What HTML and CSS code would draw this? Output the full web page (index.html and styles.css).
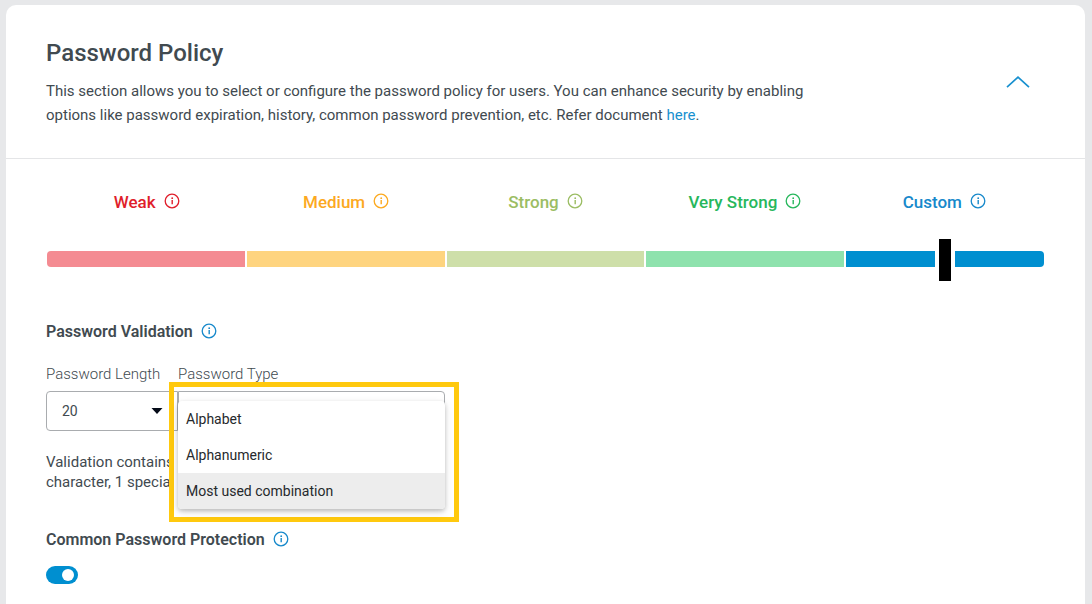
FILE: index.html
```html
<!DOCTYPE html>
<html lang="en">
<head>
<meta charset="utf-8">
<meta name="viewport" content="width=device-width, initial-scale=1">
<title>Password Policy</title>
<link rel="stylesheet" href="styles.css">
</head>
<body>
<svg class="sprite" aria-hidden="true">
  <symbol id="info" viewBox="0 0 16 16">
    <circle cx="8" cy="8" r="6.8" fill="none" stroke="currentColor" stroke-width="1.3"/>
    <path d="M8.2 7v4.2" fill="none" stroke="currentColor" stroke-width="1.4"/>
    <circle cx="8.2" cy="5.2" r="0.9" fill="currentColor"/>
  </symbol>
</svg>
<main class="card">
  <header class="card-header">
    <div class="intro">
      <h1 class="title">Password Policy</h1>
      <p class="description">This section allows you to select or configure the password policy for users. You can enhance security by enabling<br>options like password expiration, history, common password prevention, etc. Refer document <a class="link" href="#doc">here</a>.</p>
    </div>
    <button class="collapse" type="button" aria-label="Collapse section" aria-expanded="true">
      <svg width="24" height="14" viewBox="0 0 24 14"><path d="M1 12.2 12 2.2l11 10" fill="none" stroke="currentColor" stroke-width="1.7"/></svg>
    </button>
  </header>
  <div class="card-body">
    <div class="levels">
      <div class="level weak">Weak <svg class="info"><use href="#info"/></svg></div>
      <div class="level medium">Medium <svg class="info"><use href="#info"/></svg></div>
      <div class="level strong">Strong <svg class="info"><use href="#info"/></svg></div>
      <div class="level very-strong">Very Strong <svg class="info"><use href="#info"/></svg></div>
      <div class="level custom">Custom <svg class="info"><use href="#info"/></svg></div>
    </div>
    <div class="meter">
      <span class="segment weak"></span>
      <span class="segment medium"></span>
      <span class="segment strong"></span>
      <span class="segment very-strong"></span>
      <span class="segment custom"></span>
      <input class="slider" type="range" min="0" max="4" value="4" aria-label="Password strength">
    </div>

    <section class="validation">
      <h2 class="subtitle">Password Validation <svg class="info"><use href="#info"/></svg></h2>
      <div class="fields">
        <div class="field">
          <label class="label" for="length">Password Length</label>
          <div class="select-box">
            <select class="select" id="length"><option>20</option></select>
            <svg class="caret" width="12" height="6" viewBox="0 0 12 6"><path d="M0.5 0h11L6 6z" fill="#050b18"/></svg>
          </div>
        </div>
        <div class="field field-type">
          <label class="label" for="type">Password Type</label>
          <button class="select-box type-box" id="type" type="button" aria-haspopup="listbox" aria-expanded="true"></button>
          <div class="highlight"></div>
          <ul class="menu" role="listbox" aria-labelledby="type">
            <li class="option" role="option">Alphabet</li>
            <li class="option" role="option">Alphanumeric</li>
            <li class="option selected" role="option" aria-selected="true">Most used combination</li>
          </ul>
        </div>
      </div>
      <p class="hint">Validation contains<br>character, 1 special</p>
    </section>

    <section class="protection">
      <h2 class="subtitle">Common Password Protection <svg class="info"><use href="#info"/></svg></h2>
      <input class="toggle" type="checkbox" role="switch" checked aria-label="Common Password Protection">
    </section>
  </div>
</main>
</body>
</html>
```
FILE: styles.css
```css
* {
  box-sizing: border-box;
}

body {
  margin: 0;
  padding: 5px 7px 0 6px;
  min-height: 100vh;
  display: flex;
  background: #e7e8ea;
  color: #414a50;
  font-family: Roboto, "Liberation Sans", sans-serif;
  font-size: 15px;
}

h1, h2, p, ul {
  margin: 0;
  padding: 0;
}

.sprite {
  position: absolute;
  width: 0;
  height: 0;
}

.card {
  flex: 1;
  min-width: 0;
  background: #fff;
  border-radius: 10px 10px 0 0;
}

.card-header {
  display: flex;
  align-items: center;
  justify-content: space-between;
  gap: 24px;
  padding: 32px 55px 31px 40px;
  border-bottom: 1px solid #e4e5e7;
}

.title {
  font-size: 24px;
  line-height: 32px;
  font-weight: 500;
}

.description {
  margin-top: 10px;
  font-size: 15px;
  line-height: 24px;
}

.link {
  color: #1790cf;
  text-decoration: none;
}

.collapse {
  display: flex;
  padding: 0;
  border: 0;
  background: none;
  color: #1790cf;
}

.card-body {
  padding: 31px 41px 16px;
}

.levels {
  display: grid;
  grid-template-columns: repeat(5, 1fr);
}

.level {
  display: flex;
  align-items: center;
  justify-content: center;
  gap: 8px;
  font-size: 17px;
  line-height: 24px;
  font-weight: 500;
}

.info {
  flex: none;
  width: 16px;
  height: 16px;
  margin-bottom: 2px;
}

.level.weak { color: #e01e2b; }
.level.medium { color: #fca91f; }
.level.strong { color: #9bbd63; }
.level.very-strong { color: #27b75c; }
.level.custom { color: #1789cb; }

.meter {
  position: relative;
  display: grid;
  grid-template-columns: repeat(5, 1fr);
  gap: 2px;
  height: 16px;
  margin-top: 37px;
}

.segment.weak {
  background: #f48b92;
  border-radius: 4px 0 0 4px;
}

.segment.medium { background: #fed47f; }
.segment.strong { background: #cedfa9; }
.segment.very-strong { background: #8ee2ad; }

.segment.custom {
  background: #008fd0;
  border-radius: 0 4px 4px 0;
}

.slider {
  position: absolute;
  top: -12px;
  left: calc(10% - 10px);
  width: calc(80% + 21px);
  height: 42px;
  margin: 0;
  appearance: none;
  background: none;
}

.slider::-webkit-slider-thumb {
  appearance: none;
  width: 20px;
  height: 42px;
  border: solid #fff;
  border-width: 0 4px;
  background: #000;
}

.validation {
  margin: 53px 0 0 -1px;
}

.subtitle {
  display: flex;
  align-items: center;
  gap: 8px;
  font-size: 16px;
  line-height: 24px;
  font-weight: 600;
}

.subtitle .info {
  color: #1789cb;
}

.fields {
  display: flex;
  margin-top: 20px;
}

.field {
  width: 132px;
}

.field-type {
  position: relative;
  width: 267px;
}

.label {
  display: block;
  font-size: 15px;
  line-height: 20px;
  font-weight: 300;
}

.select-box {
  display: flex;
  align-items: center;
  width: 100%;
  height: 40px;
  margin-top: 7px;
  padding: 0 14px 0 15px;
  border: 1px solid #a9acaf;
  border-radius: 4px 0 0 4px;
  background: #fff;
}

.type-box {
  border-radius: 0 4px 4px 0;
}

.select {
  flex: 1;
  padding: 0;
  border: 0;
  appearance: none;
  background: none;
  color: inherit;
  font: inherit;
  font-size: 14px;
}

.highlight {
  position: absolute;
  top: 18px;
  left: -9px;
  width: 290px;
  height: 140px;
  border: 5px solid #ffc90e;
}

.menu {
  position: absolute;
  top: 37px;
  left: 0;
  width: 100%;
  overflow: hidden;
  list-style: none;
  background: #fff;
  border-radius: 4px;
  box-shadow: 0 2px 4px rgba(0, 0, 0, 0.2), 0 3px 10px rgba(0, 0, 0, 0.1);
}

.option {
  padding: 0 8px;
  color: #26292c;
  font-size: 14px;
  line-height: 36px;
}

.option.selected {
  background: #ededed;
}

.hint {
  margin-top: 21px;
  line-height: 20px;
}

.protection {
  margin: 36px 0 0 -1px;
}

.toggle {
  display: flex;
  align-items: center;
  justify-content: flex-end;
  width: 32px;
  height: 18px;
  margin: 14px 0 0;
  padding: 0 4px;
  appearance: none;
  border-radius: 9px;
  background: #008fd0;
}

.toggle::before {
  content: "";
  width: 12px;
  height: 12px;
  border-radius: 50%;
  background: #fff;
}

.toggle:not(:checked) {
  justify-content: flex-start;
  background: #a9acaf;
}
```
